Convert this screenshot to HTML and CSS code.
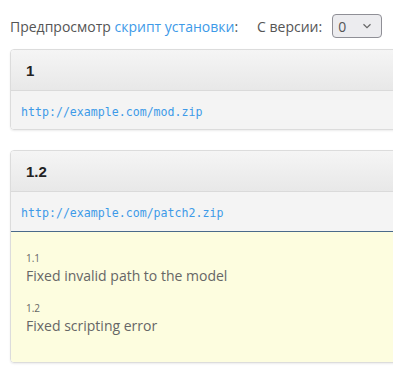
FILE: index.html
```html
<!DOCTYPE html>
<html>
<head>
<meta charset="utf-8">
<link rel="stylesheet" href="styles.css">
</head>
<body>
<div class="page">
  <div class="toolbar">
    <span class="label">Предпросмотр <a class="link" href="#">скрипт установки</a>:</span>
    <span class="label since">С версии:</span>
    <div class="select"><span>0</span>
      <svg width="10" height="6" viewBox="0 0 10 6"><path d="M1.5 1.2 L5 4.6 L8.5 1.2" fill="none" stroke="#666" stroke-width="1.2"/></svg>
    </div>
  </div>

  <div class="panel">
    <div class="panel-head">1</div>
    <div class="panel-url"><a class="mono" href="#">http://example.com/mod.zip</a></div>
  </div>

  <div class="panel">
    <div class="panel-head">1.2</div>
    <div class="panel-url with-notes"><a class="mono" href="#">http://example.com/patch2.zip</a></div>
    <div class="notes">
      <div class="note">
        <div class="note-ver">1.1</div>
        <div class="note-text">Fixed invalid path to the model</div>
      </div>
      <div class="note">
        <div class="note-ver">1.2</div>
        <div class="note-text">Fixed scripting error</div>
      </div>
    </div>
  </div>
</div>
</body>
</html>
```

FILE: styles.css
```css
html, body {
  margin: 0;
  padding: 0;
  overflow: hidden;
  background: #fff;
}
.page {
  width: 410px;
  padding: 14px 0 0 10px;
  font-family: "Open Sans", "Noto Sans", sans-serif;
  font-size: 14px;
  color: #555;
}
.toolbar {
  display: flex;
  align-items: center;
  height: 24px;
  margin-bottom: 11px;
}
.link {
  color: #3d9ae8;
  text-decoration: none;
}
.since {
  margin-left: 19px;
}
.select {
  margin-left: 10px;
  width: 50px;
  height: 24px;
  box-sizing: border-box;
  border: 1px solid #8f8f96;
  border-radius: 4px;
  background: #ececef;
  display: flex;
  align-items: center;
  justify-content: space-between;
  padding: 0 9px 0 5px;
  color: #555;
}
.panel {
  border: 1px solid #dcdcdc;
  border-radius: 4px;
  box-shadow: 0 1px 2px rgba(0,0,0,0.08);
  margin-bottom: 20px;
  overflow: hidden;
}
.panel-head {
  height: 41px;
  box-sizing: border-box;
  padding: 1px 15px 0;
  display: flex;
  align-items: center;
  background: linear-gradient(#f5f5f5, #e8e8e8);
  border-bottom: 1px solid #dadada;
  font-family: "Liberation Sans", Arial, sans-serif;
  font-weight: bold;
  font-size: 15px;
  color: #222;
}
.panel-url {
  height: 38px;
  box-sizing: border-box;
  padding: 3px 10px 0;
  display: flex;
  align-items: center;
  background: #f4f4f4;
}
.panel-url.with-notes {
  height: 40px;
  border-bottom: 1px solid #4a6a8a;
}
.mono {
  font-family: "DejaVu Sans Mono", monospace;
  font-size: 11.6px;
  color: #3d9ae8;
  text-decoration: none;
}
.notes {
  background: #fdfddf;
  padding: 18px 15px 26px;
  display: flex;
  flex-direction: column;
  gap: 14px;
}
.note-ver {
  font-size: 10px;
  line-height: 16px;
  color: #666;
}
.note-text {
  font-size: 14px;
  line-height: 20px;
  color: #666;
}
```
